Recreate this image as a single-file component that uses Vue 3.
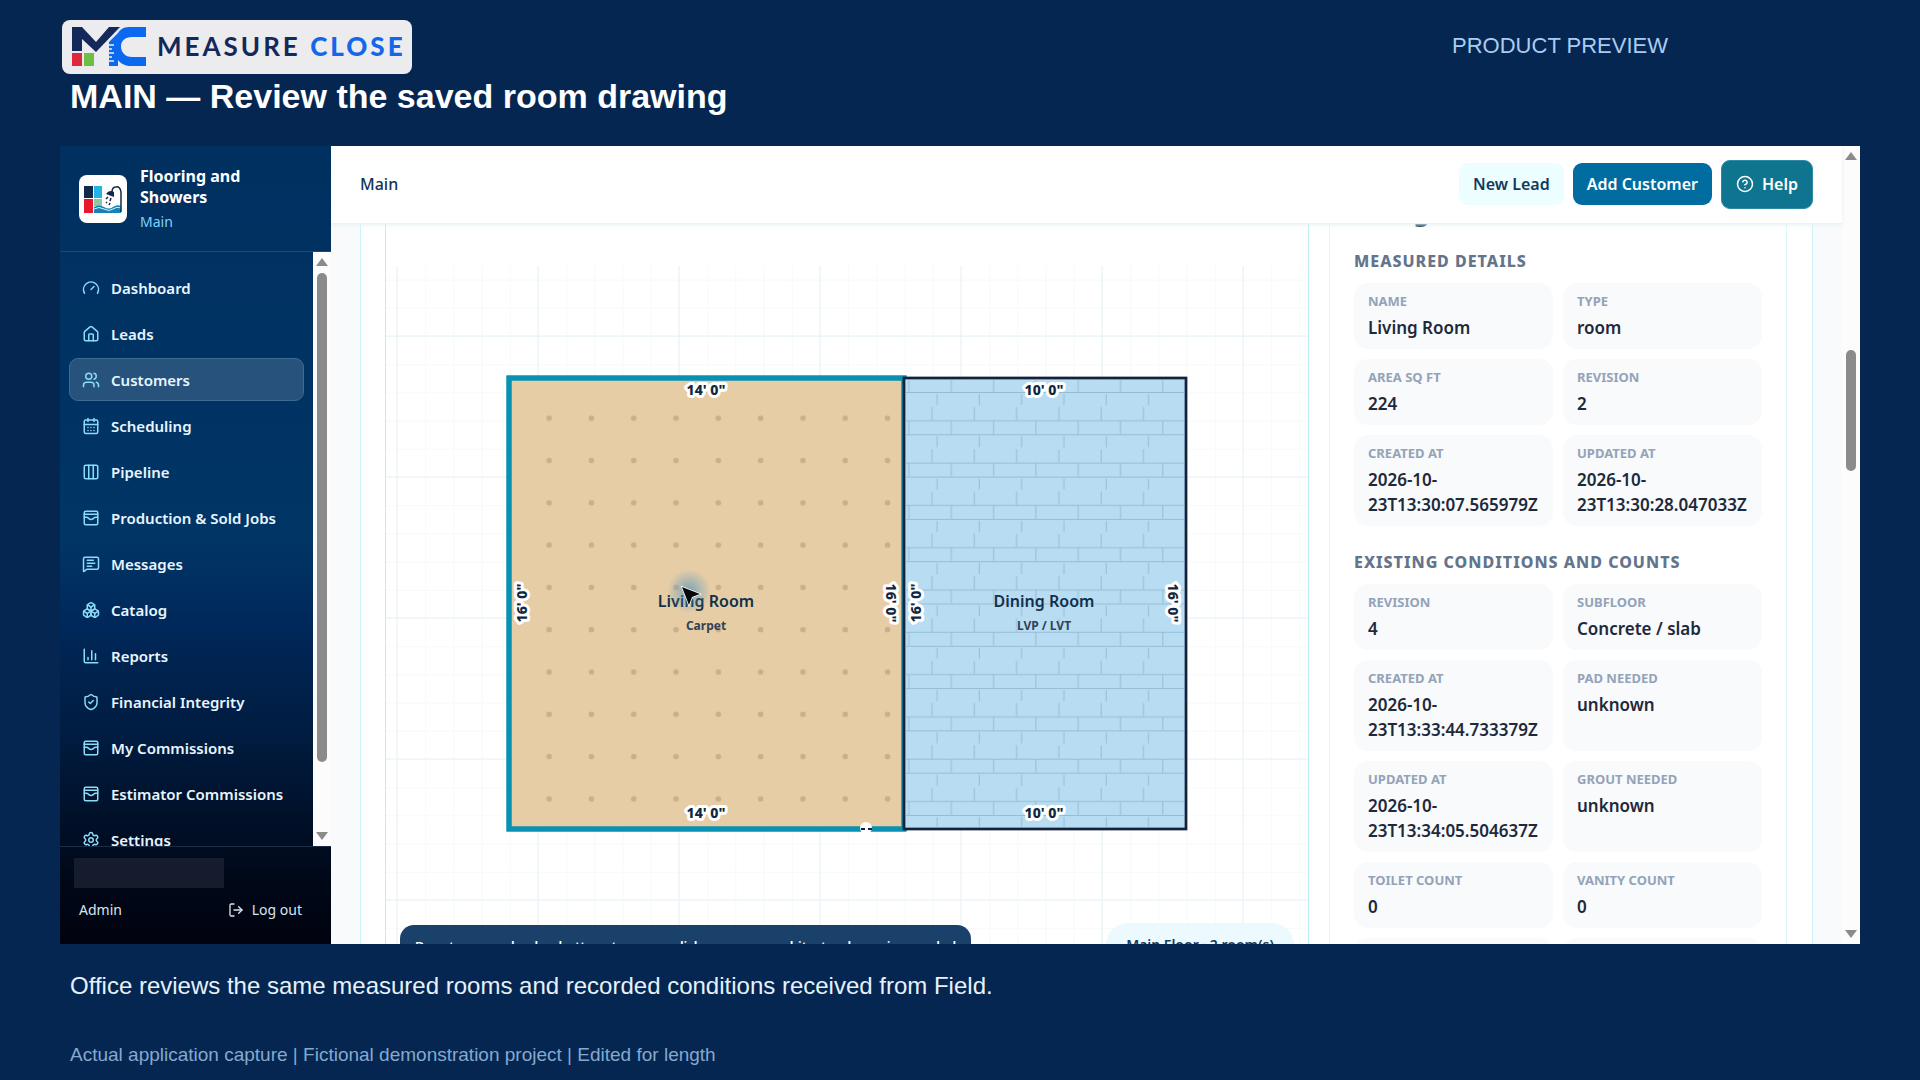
<script setup>
const nav = [
  { label: 'Dashboard', icon: 'gauge' },
  { label: 'Leads', icon: 'home' },
  { label: 'Customers', icon: 'users', active: true },
  { label: 'Scheduling', icon: 'calendar' },
  { label: 'Pipeline', icon: 'columns' },
  { label: 'Production & Sold Jobs', icon: 'wallet' },
  { label: 'Messages', icon: 'message' },
  { label: 'Catalog', icon: 'boxes' },
  { label: 'Reports', icon: 'chart' },
  { label: 'Financial Integrity', icon: 'shield' },
  { label: 'My Commissions', icon: 'wallet' },
  { label: 'Estimator Commissions', icon: 'wallet' },
  { label: 'Settings', icon: 'gear' },
]

const icons = {
  gauge: ['M12 14l4-4', 'M3.34 19a10 10 0 1 1 17.32 0'],
  home: ['M15 21v-8a1 1 0 0 0-1-1h-4a1 1 0 0 0-1 1v8', 'M3 10a2 2 0 0 1 .709-1.528l7-6a2 2 0 0 1 2.582 0l7 6A2 2 0 0 1 21 10v9a2 2 0 0 1-2 2H5a2 2 0 0 1-2-2z'],
  users: ['M16 21v-2a4 4 0 0 0-4-4H6a4 4 0 0 0-4 4v2', 'M9 11a4 4 0 1 0 0-8a4 4 0 0 0 0 8z', 'M22 21v-2a4 4 0 0 0-3-3.87', 'M16 3.13a4 4 0 0 1 0 7.75'],
  calendar: ['M8 2v4', 'M16 2v4', 'M5 4h14a2 2 0 0 1 2 2v14a2 2 0 0 1-2 2H5a2 2 0 0 1-2-2V6a2 2 0 0 1 2-2z', 'M3 10h18', 'M8 14h.01', 'M12 14h.01', 'M16 14h.01', 'M8 18h.01', 'M12 18h.01', 'M16 18h.01'],
  columns: ['M5 3h14a2 2 0 0 1 2 2v14a2 2 0 0 1-2 2H5a2 2 0 0 1-2-2V5a2 2 0 0 1 2-2z', 'M9 3v18', 'M15 3v18'],
  wallet: ['M5 3h14a2 2 0 0 1 2 2v14a2 2 0 0 1-2 2H5a2 2 0 0 1-2-2V5a2 2 0 0 1 2-2z', 'M3 7h18', 'M3 11h3c.8 0 1.6.3 2.1.9l1.1.9c1.6 1.6 4.1 1.6 5.7 0l1.1-.9c.5-.5 1.3-.9 2.1-.9H21'],
  message: ['M22 17a2 2 0 0 1-2 2H6.828a2 2 0 0 0-1.414.586l-2.202 2.202A.71.71 0 0 1 2 21.286V5a2 2 0 0 1 2-2h16a2 2 0 0 1 2 2z', 'M7 7h8', 'M7 11h10', 'M7 15h6'],
  boxes: [
    'M2.97 12.92A2 2 0 0 0 2 14.63v3.24a2 2 0 0 0 .97 1.71l3 1.8a2 2 0 0 0 2.06 0L12 19v-5.5l-5-3z', 'M7 16.5l-4.74-2.85', 'M7 16.5l5-3', 'M7 16.5v5.17',
    'M12 13.5V19l3.97 2.38a2 2 0 0 0 2.06 0l3-1.8a2 2 0 0 0 .97-1.71v-3.24a2 2 0 0 0-.97-1.71L17 10.5z', 'M17 16.5l-5-3', 'M17 16.5l4.74-2.85', 'M17 16.5v5.17',
    'M7.97 4.42A2 2 0 0 0 7 6.13v4.37l5 3 5-3V6.13a2 2 0 0 0-.97-1.71l-3-1.8a2 2 0 0 0-2.06 0z', 'M12 8L7.26 5.15', 'M12 8l4.74-2.85', 'M12 13.5V8',
  ],
  chart: ['M3 3v16a2 2 0 0 0 2 2h16', 'M18 17V9', 'M13 17V5', 'M8 17v-3'],
  shield: ['M20 13c0 5-3.5 7.5-7.66 8.95a1 1 0 0 1-.67-.01C7.5 20.5 4 18 4 13V6a1 1 0 0 1 1-1c2 0 4.5-1.2 6.24-2.72a1.17 1.17 0 0 1 1.52 0C14.51 3.81 17 5 19 5a1 1 0 0 1 1 1z', 'M9 12l2 2 4-4'],
  gear: ['M9.671 4.136a2.34 2.34 0 0 1 4.659 0 2.34 2.34 0 0 0 3.319 1.915 2.34 2.34 0 0 1 2.33 4.033 2.34 2.34 0 0 0 0 3.831 2.34 2.34 0 0 1-2.33 4.033 2.34 2.34 0 0 0-3.319 1.915 2.34 2.34 0 0 1-4.659 0 2.34 2.34 0 0 0-3.32-1.915 2.34 2.34 0 0 1-2.33-4.033 2.34 2.34 0 0 0 0-3.831A2.34 2.34 0 0 1 6.35 6.051a2.34 2.34 0 0 0 3.319-1.915', 'M12 15a3 3 0 1 0 0-6a3 3 0 0 0 0 6z'],
}

const sections = [
  {
    title: 'Measured details',
    cells: [
      ['Name', 'Living Room'],
      ['Type', 'room'],
      ['Area sq ft', '224'],
      ['Revision', '2'],
      ['Created at', '2026-10-23T13:30:07.565979Z'],
      ['Updated at', '2026-10-23T13:30:28.047033Z'],
    ],
  },
  {
    title: 'Existing conditions and counts',
    cells: [
      ['Revision', '4'],
      ['Subfloor', 'Concrete / slab'],
      ['Created at', '2026-10-23T13:33:44.733379Z'],
      ['Pad needed', 'unknown'],
      ['Updated at', '2026-10-23T13:34:05.504637Z'],
      ['Grout needed', 'unknown'],
      ['Toilet count', '0'],
      ['Vanity count', '0'],
      ['', ''],
      ['', ''],
    ],
  },
]

// One heavy grid line every five feet, one light line per foot.
const majorX = [11, 152, 293, 434, 575, 716, 857]
const majorY = [112, 253, 394, 535, 676]

const dims = [
  { x: 320, y: 166, r: 0, t: '14\' 0"' },
  { x: 320, y: 589, r: 0, t: '14\' 0"' },
  { x: 136, y: 379, r: -90, t: '16\' 0"' },
  { x: 505, y: 379, r: 90, t: '16\' 0"' },
  { x: 530, y: 379, r: -90, t: '16\' 0"' },
  { x: 658, y: 166, r: 0, t: '10\' 0"' },
  { x: 658, y: 589, r: 0, t: '10\' 0"' },
  { x: 787, y: 379, r: 90, t: '16\' 0"' },
]
</script>

<template>
  <div class="page">
    <header class="head">
      <div class="brandrow">
        <div class="logo">
          <svg class="mark" viewBox="0 0 74 40" aria-hidden="true">
            <path d="M0 25V1h10l14 15L37 1h11L24 26 10 13v12z" fill="#14285a" />
            <rect x="0" y="27" width="10" height="13" fill="#e0283c" />
            <rect x="12" y="27" width="10" height="13" fill="#6cbf43" />
            <path d="M74 1H57C51 1 48 4 46 7L37 16v24h9v-6c3 4 8 6 13 6h15v-9H60c-7 0-11-5-11-10.500s4-9.500 11-9.500h14z" fill="#0b69f0" />
            <path d="M37 19h5M37 23h3M37 27h5M37 31h3M37 35h5" stroke="#eeeef0" stroke-width="1.500" />
          </svg>
          <span class="word">MEASURE <b>CLOSE</b></span>
        </div>
        <span class="preview">PRODUCT PREVIEW</span>
      </div>
      <h1>MAIN — Review the saved room drawing</h1>
    </header>

    <div class="app">
      <aside class="side">
        <div class="org">
          <svg class="orgmark" viewBox="0 0 48 48" aria-hidden="true">
            <rect width="48" height="48" rx="8" fill="#fff" />
            <rect x="5" y="11" width="9" height="12" fill="#14284b" />
            <rect x="15" y="11" width="8" height="12" fill="#22b4e6" />
            <rect x="5" y="24" width="9" height="14" fill="#e8192c" />
            <rect x="15" y="24" width="8" height="7" fill="#8cc9a0" />
            <path d="M15 32q5-3 10 0t9 0 8-1v7H15z" fill="#1583b5" />
            <path d="M15 34q5-3 10 0t9 0 8-1" fill="none" stroke="#d8f1fa" stroke-width="1" />
            <path d="M42 37V17q-1-6-5-5-4 0-4 5" fill="none" stroke="#14284b" stroke-width="1.500" />
            <path d="M27 19q3-5 8-2l0 5z" fill="#14284b" />
            <path d="M29 22l-2 2M32 23l-1 3M28 27l-1 1M31 28l-1 2" stroke="#14284b" stroke-width="1.500" />
          </svg>
          <div class="orgtext">
            <strong>Flooring and Showers</strong>
            <span>Main</span>
          </div>
        </div>
        <div class="navwrap">
          <nav class="nav">
            <a v-for="n in nav" :key="n.label" href="#" :class="{ active: n.active }">
              <svg viewBox="0 0 24 24" class="ico" aria-hidden="true"><path v-for="d in icons[n.icon]" :key="d" :d="d" /></svg>
              <span>{{ n.label }}</span>
            </a>
          </nav>
          <div class="bar">
            <i class="up"></i>
            <i class="thumb navthumb"></i>
            <i class="down"></i>
          </div>
        </div>
        <div class="user">
          <div class="masked"></div>
          <div class="userrow">
            <span>Admin</span>
            <button type="button" class="logout">
              <svg viewBox="0 0 24 24" class="ico" aria-hidden="true"><path d="M9 21H5a2 2 0 0 1-2-2V5a2 2 0 0 1 2-2h4" /><path d="M16 17l5-5-5-5" /><path d="M21 12H9" /></svg>
              Log out
            </button>
          </div>
        </div>
      </aside>

      <main class="main">
        <div class="topbar">
          <span class="crumb">Main</span>
          <button type="button" class="btn light">New Lead</button>
          <button type="button" class="btn blue">Add Customer</button>
          <button type="button" class="btn help">
            <svg viewBox="0 0 24 24" class="ico" aria-hidden="true"><circle cx="12" cy="12" r="10" /><path d="M9.09 9a3 3 0 0 1 5.83 1c0 2-3 3-3 3" /><path d="M12 17h.01" /></svg>
            Help
          </button>
        </div>
        <div class="scroll">
          <section class="outer">
            <div class="canvas">
              <svg class="plan" viewBox="0 0 922 720" preserveAspectRatio="xMinYMin slice" role="img" aria-label="Floor plan">
                <defs>
                  <pattern id="minor" x="11" y="112" width="28.2" height="28.2" patternUnits="userSpaceOnUse">
                    <path d="M0 .5H28.2M.5 0V28.2" stroke="#f6f9fa" fill="none" />
                  </pattern>
                  <pattern id="carpet" x="142" y="173" width="42.3" height="42.3" patternUnits="userSpaceOnUse">
                    <circle cx="21.15" cy="21.15" r="2.8" fill="#c9b08b" />
                  </pattern>
                  <pattern id="plank" x="522.2" y="168" width="42.3" height="42.3" patternUnits="userSpaceOnUse">
                    <path d="M0 .5H42.3M0 28.7H42.3M28.8 2V13M23.8 15V28M.8 29V42" stroke="#93bdd3" fill="none" />
                  </pattern>
                  <radialGradient id="glow">
                    <stop offset="0" stop-color="#4f94c0" stop-opacity=".7" />
                    <stop offset="1" stop-color="#4f94c0" stop-opacity="0" />
                  </radialGradient>
                </defs>
                <rect y="42" width="922" height="678" fill="url(#minor)" />
                <g class="major">
                  <line v-for="x in majorX" :key="x" :x1="x" :x2="x" y1="42" y2="720" />
                  <line v-for="y in majorY" :key="y" x1="0" x2="922" :y1="y" :y2="y" />
                </g>
                <g stroke="#0891b2" stroke-width="5">
                  <rect x="123" y="154" width="395" height="451" fill="#e7cda6" />
                  <rect x="123" y="154" width="395" height="451" fill="url(#carpet)" />
                </g>
                <g stroke="#14213a" stroke-width="2.4">
                  <rect x="518" y="154" width="282" height="451" fill="#b8ddf3" />
                  <rect x="518" y="154" width="282" height="451" fill="url(#plank)" />
                </g>
                <circle cx="480" cy="604" r="6" fill="#fff" />
                <path d="M475 605h4M482 605h4" stroke="#14213a" stroke-width="2" />
                <text v-for="(d, i) in dims" :key="i" class="dim" :transform="`translate(${d.x} ${d.y}) rotate(${d.r})`" y="5">{{ d.t }}</text>
                <text class="room" x="320" y="383">Living Room</text>
                <text class="floor" x="320" y="406">Carpet</text>
                <text class="room" x="658" y="383">Dining Room</text>
                <text class="floor" x="658" y="406">LVP / LVT</text>
                <circle cx="303" cy="367" r="22" fill="url(#glow)" />
                <path d="M296 363l18 7-8 3-3 8z" fill="#06080c" stroke="#fff" stroke-width="1.5" paint-order="stroke" />
              </svg>
              <div class="hint">Drag to pan · wheel or buttons to zoom · click a room or architectural opening symbol</div>
              <div class="level">Main Floor · 2 room(s)</div>
            </div>
            <div class="details">
              <h2>Living Room</h2>
              <template v-for="s in sections" :key="s.title">
                <h3>{{ s.title }}</h3>
                <dl>
                  <div v-for="(c, i) in s.cells" :key="i">
                    <dt>{{ c[0] }}</dt>
                    <dd>{{ c[1] }}</dd>
                  </div>
                </dl>
              </template>
            </div>
          </section>
        </div>
      </main>
      <div class="bar pagebar">
        <i class="up"></i>
        <i class="thumb pagethumb"></i>
        <i class="down"></i>
      </div>
    </div>

    <footer class="foot">
      <p class="caption">Office reviews the same measured rooms and recorded conditions received from Field.</p>
      <p class="note">Actual application capture | Fictional demonstration project | Edited for length</p>
    </footer>
  </div>
</template>

<style>
body {
  margin: 0;
  background: #052650;
}
</style>

<style scoped>
* {
  box-sizing: border-box;
}
.page {
  min-height: 100vh;
  padding: 20px 60px 0;
  background: #052650;
  color: #fff;
  font-family: "Liberation Sans", Arial, sans-serif;
}
.head {
  height: 126px;
}
.brandrow {
  display: flex;
  justify-content: space-between;
  padding: 0 192px 0 2px;
}
.logo {
  display: flex;
  align-items: center;
  gap: 11px;
  width: 350px;
  height: 54px;
  padding: 0 10px 2px;
  border-radius: 8px;
  background: #ececee;
}
.mark {
  flex: none;
  width: 74px;
  height: 40px;
}
.word {
  font: 700 26px/30px Lato, sans-serif;
  letter-spacing: 3px;
  white-space: nowrap;
  color: #14285a;
}
.word b {
  color: #1466ea;
}
.preview {
  padding-top: 13px;
  font-size: 22px;
  line-height: 26px;
  color: #a9cdf2;
}
h1 {
  margin: 3px 0 0 10px;
  font-size: 34px;
  line-height: 38px;
}
.app {
  display: flex;
  height: 798px;
  overflow: hidden;
  background: #fff;
  font-family: "Noto Sans", "Open Sans", sans-serif;
}
.side {
  position: relative;
  z-index: 2;
  display: flex;
  flex-direction: column;
  flex: none;
  width: 271px;
  background: linear-gradient(#003060 0%, #003566 50%, #00285a 60%, #001c40 74%, #000818 92%, #00030f 100%);
}
.org {
  display: flex;
  align-items: center;
  gap: 13px;
  height: 106px;
  padding: 0 19px;
  border-bottom: 1px solid #1a4a75;
}
.orgmark {
  flex: none;
  width: 48px;
  height: 48px;
}
.orgtext {
  width: 130px;
}
.orgtext strong {
  display: block;
  font-size: 16px;
  font-weight: 700;
  line-height: 21px;
}
.orgtext span {
  display: block;
  margin-top: 4px;
  font-size: 14px;
  line-height: 20px;
  color: #7dd3fc;
}
.navwrap {
  display: flex;
  flex: 1;
  min-height: 0;
}
.nav {
  display: flex;
  flex: 1;
  flex-direction: column;
  gap: 3px;
  overflow: hidden;
  padding: 14px 9px;
}
.nav a {
  display: flex;
  flex: none;
  align-items: center;
  gap: 11px;
  height: 43px;
  padding: 0 12px;
  border: 1px solid transparent;
  border-radius: 9px;
  font-size: 15px;
  font-weight: 600;
  white-space: nowrap;
  text-decoration: none;
  color: #e8f6ff;
}
.nav a.active {
  border-color: #3f6a91;
  background: #26527b;
}
.ico {
  flex: none;
  width: 18px;
  height: 18px;
  fill: none;
  stroke: currentColor;
  stroke-width: 2;
  stroke-linecap: round;
  stroke-linejoin: round;
}
.nav .ico {
  color: #8adcf8;
}
.bar {
  display: flex;
  flex: none;
  flex-direction: column;
  align-items: center;
  width: 18px;
  padding: 6px 0;
  background: #fcfcfc;
}
.up,
.down {
  border: 6px solid transparent;
}
.up {
  border-top: 0;
  border-bottom: 8px solid #8b8b8b;
}
.down {
  margin-top: auto;
  border-bottom: 0;
  border-top: 8px solid #8b8b8b;
}
.thumb {
  width: 10px;
  border-radius: 5px;
  background: #8b8b8b;
}
.navthumb {
  height: 489px;
  margin-top: 7px;
}
.pagethumb {
  height: 121px;
  margin-top: 190px;
}
.user {
  height: 98px;
  padding: 11px 29px 0 14px;
  border-top: 1px solid #1a2c46;
}
.masked {
  width: 150px;
  height: 30px;
  background: #141c2e;
}
.userrow {
  display: flex;
  align-items: center;
  justify-content: space-between;
  padding: 12px 0 0 5px;
  font-size: 14px;
  line-height: 20px;
  color: #dbe4ee;
}
.logout {
  display: flex;
  align-items: center;
  gap: 8px;
  padding: 0;
  border: 0;
  background: none;
  font: inherit;
  color: inherit;
}
.logout .ico {
  width: 16px;
  height: 16px;
}
.main {
  display: flex;
  flex: 1;
  flex-direction: column;
  min-width: 0;
}
.topbar {
  display: flex;
  flex: none;
  align-items: center;
  gap: 9px;
  height: 78px;
  padding: 0 29px 1px;
  border-bottom: 1px solid #e6f6f8;
  box-shadow: 0 1px 4px #e8f0f2;
  z-index: 1;
  background: #fff;
}
.crumb {
  margin-right: auto;
  font-size: 16px;
  font-weight: 500;
  color: #123456;
}
.btn {
  display: flex;
  align-items: center;
  gap: 8px;
  height: 42px;
  padding: 0 14px;
  border: 0;
  border-radius: 9px;
  font: 600 16px/20px "Noto Sans", "Open Sans", sans-serif;
  white-space: nowrap;
  color: #fff;
}
.light {
  background: #ecfeff;
  color: #123a5c;
}
.blue {
  background: #006c9f;
}
.help {
  height: 49px;
  border: 1px solid #2b8aa5;
  background: #0e7490;
}
.scroll {
  display: flex;
  flex: 1;
  min-height: 0;
  overflow: hidden;
  padding: 0 29px;
  background: #f8fafc;
}
.outer {
  display: flex;
  flex: 1;
  gap: 20px;
  min-width: 0;
  padding: 0 25px 0 24px;
  border: solid #cdf3f8;
  border-width: 0 1px;
  background: #fff;
}
.canvas {
  position: relative;
  flex: 1;
  min-width: 0;
  border: solid #bdeef6;
  border-width: 0 1px;
}
.plan {
  display: block;
  width: 100%;
  height: 720px;
}
.plan text {
  text-anchor: middle;
  font-family: "Noto Sans", "Open Sans", sans-serif;
}
.major line {
  stroke: #e6f3f7;
  stroke-width: 1px;
}
.plan .dim {
  font-size: 14px;
  font-weight: 800;
  fill: #0f2740;
  stroke: #fff;
  stroke-width: 6px;
  stroke-linejoin: round;
  paint-order: stroke;
}
.plan .room {
  font-size: 16px;
  font-weight: 600;
  fill: #12304a;
}
.plan .floor {
  font-size: 12px;
  font-weight: 700;
  fill: #334155;
}
.hint,
.level {
  position: absolute;
  font-weight: 600;
  white-space: nowrap;
}
.hint {
  top: 701px;
  left: 14px;
  padding: 12px 15px;
  border-radius: 14px;
  background: #1a416a;
  font-size: 13px;
  line-height: 18px;
}
.level {
  top: 699px;
  right: 14px;
  padding: 12px 20px;
  border-radius: 22px;
  background: #ecf9fe;
  font-size: 14px;
  line-height: 20px;
  color: #123a5c;
}
.details {
  flex: none;
  width: 458px;
  padding: 0 24px;
  border: solid #def7fa;
  border-width: 0 1px;
}
h2 {
  margin: -30px 0 0;
  font-size: 25px;
  font-weight: 700;
  line-height: 34px;
  color: #082f49;
}
h3 {
  margin: 24px 0 10px;
  font-size: 16px;
  font-weight: 800;
  line-height: 24px;
  letter-spacing: 1px;
  text-transform: uppercase;
  color: #64748b;
}
h2 + h3 {
  margin-top: 21px;
}
dl {
  display: grid;
  grid-template-columns: 1fr 1fr;
  gap: 10px;
  margin: 0;
}
dl div {
  min-width: 0;
  min-height: 66px;
  padding: 9px 14px;
  border-radius: 14px;
  background: #f8fafc;
}
dt {
  font-size: 13px;
  font-weight: 700;
  line-height: 18px;
  text-transform: uppercase;
  color: #94a3b8;
}
dd {
  margin: 5px 0 0;
  font-size: 17px;
  font-weight: 600;
  line-height: 25px;
  overflow-wrap: break-word;
  color: #1e293b;
}
.foot {
  padding: 28px 10px 0;
}
.foot p {
  margin: 0;
}
.caption {
  font-size: 24px;
  line-height: 28px;
  color: #e6f1fb;
}
.note {
  padding-top: 44px;
  font-size: 19px;
  line-height: 22px;
  color: #84a9cf;
}
</style>
